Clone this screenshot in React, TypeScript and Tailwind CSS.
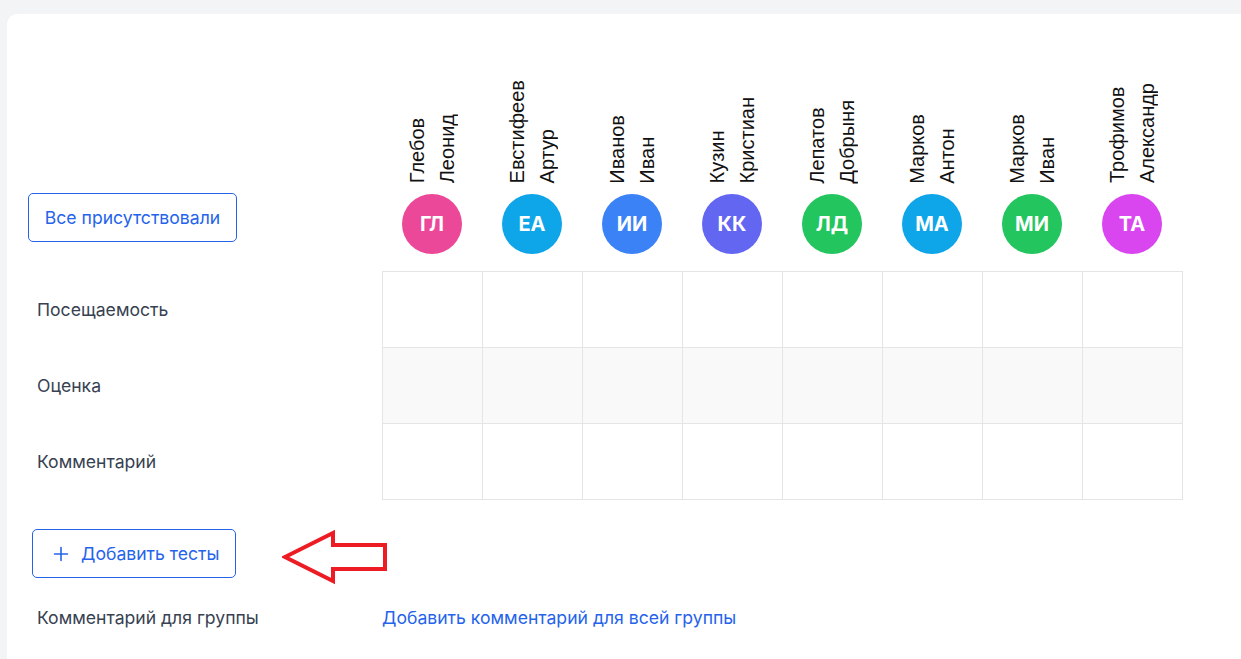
import React from 'react';

const students = [
  { last: 'Глебов', first: 'Леонид', initials: 'ГЛ', color: 'bg-[#ec4899]' },
  { last: 'Евстифеев', first: 'Артур', initials: 'ЕА', color: 'bg-[#0ea5e9]' },
  { last: 'Иванов', first: 'Иван', initials: 'ИИ', color: 'bg-[#3b82f6]' },
  { last: 'Кузин', first: 'Кристиан', initials: 'КК', color: 'bg-[#6366f1]' },
  { last: 'Лепатов', first: 'Добрыня', initials: 'ЛД', color: 'bg-[#22c55e]' },
  { last: 'Марков', first: 'Антон', initials: 'МА', color: 'bg-[#0ea5e9]' },
  { last: 'Марков', first: 'Иван', initials: 'МИ', color: 'bg-[#22c55e]' },
  { last: 'Трофимов', first: 'Александр', initials: 'ТА', color: 'bg-[#d946ef]' },
];

const rows = ['Посещаемость', 'Оценка', 'Комментарий'];

function PlusIcon() {
  return (
    <svg width="16" height="16" viewBox="0 0 16 16" fill="none" stroke="currentColor" strokeWidth="1.6" strokeLinecap="round">
      <path d="M8 1.5v13M1.5 8h13" />
    </svg>
  );
}

function RedArrow() {
  return (
    <svg className="absolute left-[275px] top-[1px]" width="108" height="56" viewBox="0 0 108 56" fill="none">
      <polygon points="3,27 51,3 51,15 103,15 103,39 51,39 51,51" stroke="#ed1c24" strokeWidth="4" strokeLinejoin="miter" />
    </svg>
  );
}

export default function App() {
  return (
    <div className="min-h-screen bg-[#f3f4f6] pt-[14px] pl-[7px] overflow-hidden" style={{ fontFamily: 'Inter, "Noto Sans", sans-serif' }}>
      <div className="bg-white rounded-tl-[10px] h-[660px]">
        {/* header: button + student names */}
        <div className="flex pt-[66px]">
          <div className="w-[375px] flex items-end pb-[29px] pl-[21px]">
            <button className="h-[49px] w-[209px] border border-[#2563eb] rounded-[5px] text-[#2563eb] text-[17.6px]">
              Все присутствовали
            </button>
          </div>
          {students.map((s, i) => (
            <div key={i} className="w-[100px] flex flex-col items-center justify-end pb-[17px]">
              <div
                className="text-[20px] leading-[30px] text-[#111] [writing-mode:vertical-rl] rotate-180 whitespace-nowrap"
                style={{ fontFamily: '"Liberation Sans", Arial, sans-serif' }}
              >
                <div>{s.last}</div>
                <div>{s.first}</div>
              </div>
              <div className={`mt-[11px] w-[60px] h-[60px] rounded-full ${s.color} flex items-center justify-center text-white font-bold text-[20px]`}>
                {s.initials}
              </div>
            </div>
          ))}
        </div>

        {/* grid rows */}
        {rows.map((r, ri) => (
          <div key={r} className="flex">
            <div className="w-[375px] pl-[30px] flex items-center text-[17.6px] text-[#374151]">{r}</div>
            <div className={`flex border-l border-[#e5e5e5] ${ri === 0 ? 'border-t' : ''}`}>
              {students.map((_, ci) => (
                <div
                  key={ci}
                  className={`w-[100px] h-[76px] border-r border-b border-[#e5e5e5] ${ri === 1 ? 'bg-[#f9f9f9]' : 'bg-white'}`}
                />
              ))}
            </div>
          </div>
        ))}

        {/* add tests */}
        <div className="relative mt-[29px] pl-[25px]">
          <button className="h-[49px] w-[204px] border border-[#2563eb] rounded-[5px] text-[#2563eb] text-[17.6px] flex items-center pl-[20px] gap-[12px]">
            <PlusIcon />
            <span>Добавить тесты</span>
          </button>
          <RedArrow />
        </div>

        {/* group comment */}
        <div className="flex mt-[27px] text-[17.6px]">
          <div className="w-[375px] pl-[30px] text-[#374151]">Комментарий для группы</div>
          <a className="text-[#2563eb] cursor-pointer">Добавить комментарий для всей группы</a>
        </div>
      </div>
    </div>
  );
}
